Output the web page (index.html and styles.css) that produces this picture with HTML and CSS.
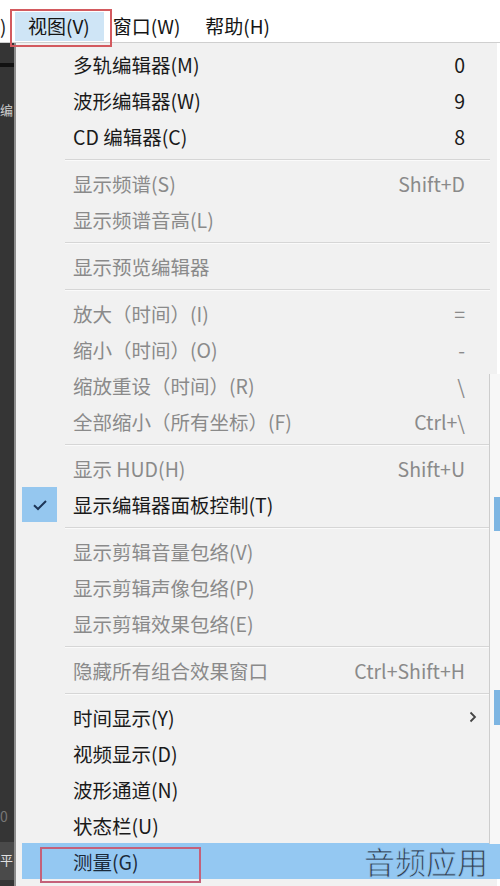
FILE: index.html
```html
<!DOCTYPE html>
<html lang="zh-CN">
<head>
<meta charset="utf-8">
<title>视图菜单</title>
<link rel="stylesheet" href="styles.css">
</head>
<body>
<div class="screen">
  <div class="topbar">
    <span class="cut">)</span>
    <span class="tm active">视图(V)</span>
    <span class="tm">窗口(W)</span>
    <span class="tm">帮助(H)</span>
    <span class="redbox top"></span>
  </div>
  <div class="main">
    <div class="strip">
      <div class="band1"></div>
      <div class="stxt s1">编</div>
      <div class="grow"></div>
      <div class="stxt s2">0</div>
      <div class="band2">平</div>
    </div>
    <div class="menu">
      <div class="item"><span>多轨编辑器(M)</span><span class="key">0</span></div>
      <div class="item"><span>波形编辑器(W)</span><span class="key">9</span></div>
      <div class="item"><span>CD 编辑器(C)</span><span class="key">8</span></div>
      <div class="sep"></div>
      <div class="item dis"><span>显示频谱(S)</span><span class="key">Shift+D</span></div>
      <div class="item dis"><span>显示频谱音高(L)</span><span class="key"></span></div>
      <div class="sep"></div>
      <div class="item dis"><span>显示预览编辑器</span><span class="key"></span></div>
      <div class="sep"></div>
      <div class="item dis"><span>放大（时间）(I)</span><span class="key">=</span></div>
      <div class="item dis"><span>缩小（时间）(O)</span><span class="key">-</span></div>
      <div class="item dis"><span>缩放重设（时间）(R)</span><span class="key">\</span></div>
      <div class="item dis"><span>全部缩小（所有坐标）(F)</span><span class="key">Ctrl+\</span></div>
      <div class="sep"></div>
      <div class="item dis"><span>显示 HUD(H)</span><span class="key">Shift+U</span></div>
      <div class="item checked">
        <span class="check"><svg width="16" height="12" viewBox="0 0 16 12"><path d="M2 6.2 L6 10 L14 2" fill="none" stroke="#1d3557" stroke-width="2"/></svg></span>
        <span>显示编辑器面板控制(T)</span><span class="key"></span>
      </div>
      <div class="sep"></div>
      <div class="item dis"><span>显示剪辑音量包络(V)</span><span class="key"></span></div>
      <div class="item dis"><span>显示剪辑声像包络(P)</span><span class="key"></span></div>
      <div class="item dis"><span>显示剪辑效果包络(E)</span><span class="key"></span></div>
      <div class="sep"></div>
      <div class="item dis"><span>隐藏所有组合效果窗口</span><span class="key">Ctrl+Shift+H</span></div>
      <div class="sep"></div>
      <div class="item"><span>时间显示(Y)</span><span class="key arrow"><svg width="10" height="14" viewBox="0 0 10 14"><path d="M2.5 2.5 L7 7 L2.5 11.5" fill="none" stroke="#444" stroke-width="1.8"/></svg></span></div>
      <div class="item"><span>视频显示(D)</span><span class="key"></span></div>
      <div class="item"><span>波形通道(N)</span><span class="key"></span></div>
      <div class="item"><span>状态栏(U)</span><span class="key"></span></div>
      <div class="item hl"><span>测量(G)</span><span class="key"></span><span class="redbox bottom"></span></div>
    </div>
    <div class="edge">
      <div class="mark m1"></div>
      <div class="mark m2"></div>
    </div>
    <div class="watermark">音频应用</div>
  </div>
</div>
</body>
</html>
```

FILE: styles.css
```css
* { box-sizing: border-box; }
html, body { margin: 0; padding: 0; }
body {
  width: 500px;
  height: 886px;
  overflow: hidden;
  background: #ffffff;
  font-family: "Noto Sans CJK SC", "Noto Sans", sans-serif;
  color: #1c1c1c;
}
.screen { position: relative; width: 500px; height: 886px; }

.topbar {
  position: relative;
  height: 42px;
  display: flex;
  align-items: flex-start;
  padding-top: 12px;
  font-size: 19px;
  color: #141414;
  background: #ffffff;
}
.cut { width: 15px; line-height: 28px; color: #222; }
.tm { padding: 0 16px 0 9px; line-height: 28px; }
.tm.active {
  background: #cfe5f6;
  height: 29px;
  padding: 0 14px 0 13px;
}
.redbox { position: absolute; border: 2px solid #d35a5f; }
.redbox.top { left: 10px; top: 9px; width: 102px; height: 38px; z-index: 3; }

.main {
  position: relative;
  display: flex;
  height: 844px;
  border-top: 1px solid #cfcfcf;
}
.strip {
  width: 16px;
  background: #353535;
  border-right: 2px solid #8d8d8d;
  display: flex;
  flex-direction: column;
  overflow: hidden;
  font-size: 13px;
}
.band1 { height: 4px; margin-top: 20px; background: #111; }
.stxt { color: #cfcfcf; line-height: 18px; }
.s1 { margin-top: 34px; }
.s2 { color: #777; font-size: 14px; line-height: 24px; margin-bottom: 14px; }
.grow { flex: 1; }
.band2 {
  height: 38px;
  margin-bottom: 6px;
  background: #4a4a4a;
  color: #e0e0e0;
  line-height: 36px;
}

.menu {
  width: 481px;
  background: #f1f1f1;
  padding-top: 3px;
  display: flex;
  flex-direction: column;
  font-size: 19.5px;
}
.item {
  position: relative;
  height: 36px;
  display: flex;
  align-items: center;
  justify-content: space-between;
  padding-left: 57px;
  padding-right: 32px;
  color: #1a1a1a;
  white-space: nowrap;
}
.item.dis { color: #8a8a8a; }
.key { text-align: right; }
.arrow { display: flex; margin-right: -13px; }
.sep {
  height: 11px;
  display: flex;
  align-items: center;
  margin-left: 49px;
  margin-right: 7px;
}
.sep::before {
  content: "";
  flex: 1;
  height: 1px;
  background: #d6d6d6;
  box-shadow: 0 1px 0 #fafafa;
}
.check {
  position: absolute;
  left: 6px;
  top: 1px;
  width: 35px;
  height: 35px;
  background: #95c7ef;
  display: flex;
  align-items: center;
  justify-content: center;
}
.item.hl {
  margin-left: 6px;
  margin-right: -19px;
  padding-left: 51px;
  background: #94c8f2;
  color: #1b2a3a;
}
.redbox.bottom { left: 18px; top: 4px; width: 161px; height: 36px; border-color: #c4617a; }

.edge {
  position: absolute;
  left: 489px;
  top: 331px;
  width: 11px;
  height: 470px;
  background: #f7f7f7;
  border-left: 1px solid #cdcdcd;
}
.mark { position: absolute; left: 4px; width: 6px; background: #7db5e2; }
.m1 { top: 123px; height: 34px; }
.m2 { top: 316px; height: 35px; }

.watermark {
  position: absolute;
  right: 12px;
  bottom: 6px;
  font-size: 31px;
  color: #33414f;
  -webkit-text-stroke: 0.8px #94c8f2;
  line-height: 38px;
}
```
